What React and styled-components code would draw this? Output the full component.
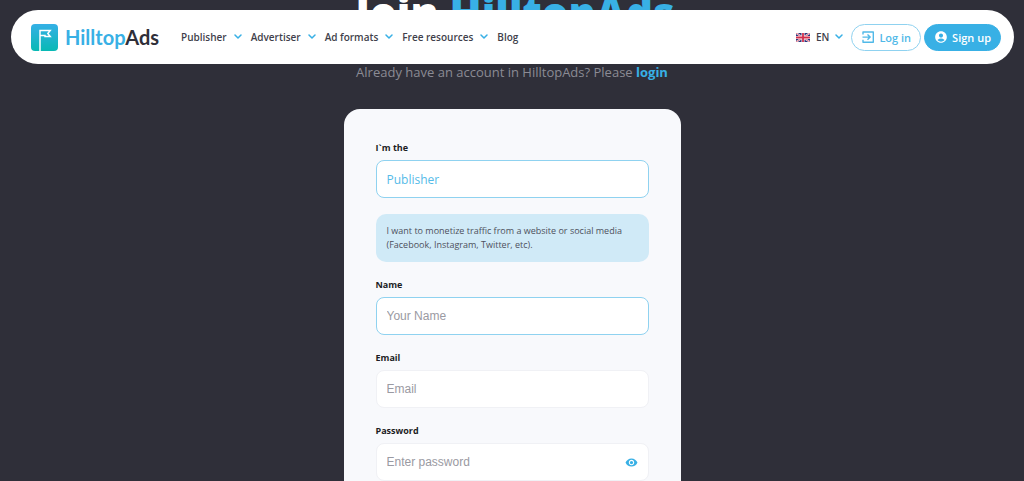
import React, { useState } from 'react';
import styled, { createGlobalStyle } from 'styled-components';
import { MdAccountCircle, MdRemoveRedEye } from 'react-icons/md';

const blue = '#38b0e5';
const dark = '#2f2f39';

const GlobalStyle = createGlobalStyle`
  * {
    box-sizing: border-box;
  }

  html {
    scrollbar-width: none;
  }

  body {
    margin: 0;
    background: ${dark};
    font-family: 'Open Sans', 'Noto Sans', sans-serif;
  }
`;

const Header = styled.header`
  position: fixed;
  z-index: 10;
  top: 10px;
  left: 11px;
  right: 10px;
  display: flex;
  align-items: center;
  height: 54px;
  padding: 0 13px 0 20px;
  border-radius: 27px;
  background: #fff;
`;

const LogoLink = styled.a`
  display: flex;
  align-items: center;
  gap: 7px;
  margin-right: 22px;
  color: ${blue};
  font-family: Lato, sans-serif;
  font-size: 20px;
  font-weight: 700;
  line-height: 27px;
  text-decoration: none;
`;

const LogoDark = styled.span`
  color: ${dark};
`;

const Nav = styled.nav`
  display: flex;
  align-items: center;
  gap: 9px;
`;

const NavLink = styled.a`
  display: flex;
  align-items: center;
  gap: 7px;
  color: #3f3f4b;
  font-size: 10px;
  font-weight: 600;
  line-height: 16px;
  text-decoration: none;
  white-space: nowrap;
`;

const Actions = styled.div`
  display: flex;
  align-items: center;
  gap: 3px;
  margin-left: auto;
`;

const LangButton = styled.button`
  display: flex;
  align-items: center;
  gap: 6px;
  margin-right: 5px;
  padding: 0;
  border: 0;
  background: none;
  color: #3f3f4b;
  font-family: inherit;
  font-size: 10px;
  font-weight: 600;
  line-height: 16px;
  cursor: pointer;
`;

const PillLink = styled.a`
  display: flex;
  align-items: center;
  gap: 4px;
  height: 27px;
  padding: 0 9px;
  border: 1px solid ${props => (props.$filled ? blue : '#8fd2f0')};
  border-radius: 14px;
  background: ${props => (props.$filled ? blue : '#fff')};
  color: ${props => (props.$filled ? '#fff' : '#50b9e8')};
  font-size: 11px;
  font-weight: 600;
  text-decoration: none;
  white-space: nowrap;
`;

const Main = styled.main`
  display: flex;
  flex-direction: column;
  align-items: center;
  margin-top: -19px;
`;

const Title = styled.h1`
  margin: 0 0 19px;
  padding-left: 6px;
  color: #fff;
  font-size: 42px;
  font-weight: 800;
  line-height: 62px;
  white-space: nowrap;
`;

const Accent = styled.span`
  color: ${blue};
`;

const Hint = styled.p`
  margin: 0 0 27px;
  color: #8b8b94;
  font-size: 13px;
  line-height: 20px;
`;

const LoginLink = styled.a`
  color: ${blue};
  font-weight: 700;
  text-decoration: none;
`;

const Form = styled.form`
  display: flex;
  flex-direction: column;
  gap: 16px;
  width: 100%;
  max-width: 337px;
  padding: 32px;
  border-radius: 16px;
  background: #f8f9fc;
`;

const Field = styled.div`
  display: flex;
  flex-direction: column;
  gap: 5px;
`;

const Label = styled.label`
  color: #1d1d24;
  font-size: 9px;
  font-weight: 700;
  line-height: 14px;
`;

const Select = styled.select`
  width: 100%;
  height: 38px;
  padding: 0 10px;
  border: 1px solid #8fd2f0;
  border-radius: 8px;
  outline: 0;
  appearance: none;
  background: #fff;
  color: #55bbe8;
  font-family: inherit;
  font-size: 12px;
`;

const Input = styled.input`
  width: 100%;
  height: 38px;
  padding: 0 10px;
  border: 1px solid ${props => (props.$active ? '#8fd2f0' : '#f0f1f5')};
  border-radius: 8px;
  outline: 0;
  background: #fff;
  color: ${dark};
  font-family: 'Liberation Sans', sans-serif;
  font-size: 12px;

  &::placeholder {
    color: #9a9aa2;
    opacity: 1;
  }
`;

const Note = styled.p`
  margin: 0;
  padding: 10px 11px;
  border-radius: 10px;
  background: #d0eaf7;
  color: #4d505c;
  font-size: 9px;
  line-height: 14px;
`;

const PasswordBox = styled.div`
  position: relative;
`;

const EyeButton = styled.button`
  position: absolute;
  top: 0;
  bottom: 0;
  right: 11px;
  display: flex;
  align-items: center;
  padding: 0;
  border: 0;
  background: none;
  color: ${blue};
  cursor: pointer;
`;

const Logo = () => (
  <svg width="27" height="27" viewBox="0 0 27 27" aria-hidden="true">
    <defs>
      <linearGradient id="logo-fill" x1="0" y1="0" x2="0" y2="1">
        <stop offset="0" stopColor="#35b0e6" />
        <stop offset="1" stopColor="#08b9b4" />
      </linearGradient>
    </defs>
    <rect width="27" height="27" rx="4" fill="url(#logo-fill)" />
    <path d="M9 27V6.5H19.2L16.8 9.5L19.2 12.5H14V11.5H9" fill="none" stroke="#fff" strokeWidth="1.5" />
  </svg>
);

const Chevron = () => (
  <svg width="8" height="6" viewBox="0 0 8 6" aria-hidden="true">
    <path d="M1 1L4 4L7 1" fill="none" stroke={blue} strokeWidth="1.5" strokeLinecap="round" strokeLinejoin="round" />
  </svg>
);

const LoginIcon = () => (
  <svg width="14" height="14" viewBox="0 0 14 14" fill="none" stroke="currentColor" strokeWidth="1.4" aria-hidden="true">
    <path d="M2 4.5V2H12.3V12.3H2V9.8" strokeLinejoin="round" />
    <path d="M1.5 7.1H9M6.5 4.5L9.1 7.1L6.5 9.7" />
  </svg>
);

const Flag = () => (
  <svg width="14" height="9" viewBox="0 0 14 9" aria-hidden="true">
    <rect width="14" height="9" fill="#29337a" />
    <path d="M0 0L14 9M14 0L0 9" stroke="#fff" strokeWidth="1.8" />
    <path d="M0 0L14 9M14 0L0 9" stroke="#d22f4c" strokeWidth="0.7" />
    <path d="M7 0V9M0 4.5H14" stroke="#fff" strokeWidth="3" />
    <path d="M7 0V9M0 4.5H14" stroke="#d22f4c" strokeWidth="1.8" />
  </svg>
);

const links = [
  { text: 'Publisher', menu: true },
  { text: 'Advertiser', menu: true },
  { text: 'Ad formats', menu: true },
  { text: 'Free resources', menu: true },
  { text: 'Blog' },
];

const NavBar = () => (
  <Header>
    <LogoLink href="#">
      <Logo />
      <span>Hilltop<LogoDark>Ads</LogoDark></span>
    </LogoLink>
    <Nav>
      {links.map(link => (
        <NavLink href="#" key={link.text}>
          {link.text}
          {link.menu && <Chevron />}
        </NavLink>
      ))}
    </Nav>
    <Actions>
      <LangButton type="button">
        <Flag />
        EN
        <Chevron />
      </LangButton>
      <PillLink href="#">
        <LoginIcon />
        Log in
      </PillLink>
      <PillLink href="#" $filled>
        <MdAccountCircle size={14} />
        Sign up
      </PillLink>
    </Actions>
  </Header>
);

const SignUpForm = () => {
  const [visible, setVisible] = useState(false);

  return (
    <Form>
      <Field>
        <Label htmlFor="role">I`m the</Label>
        <Select id="role">
          <option>Publisher</option>
        </Select>
      </Field>
      <Note>
        I want to monetize traffic from a website or social media (Facebook, Instagram, Twitter, etc).
      </Note>
      <Field>
        <Label htmlFor="name">Name</Label>
        <Input id="name" placeholder="Your Name" $active />
      </Field>
      <Field>
        <Label htmlFor="email">Email</Label>
        <Input id="email" type="email" placeholder="Email" />
      </Field>
      <Field>
        <Label htmlFor="password">Password</Label>
        <PasswordBox>
          <Input id="password" type={visible ? 'text' : 'password'} placeholder="Enter password" />
          <EyeButton type="button" aria-label="Show password" onClick={() => setVisible(!visible)}>
            <MdRemoveRedEye size={13} />
          </EyeButton>
        </PasswordBox>
      </Field>
    </Form>
  );
};

const App = () => (
  <>
    <GlobalStyle />
    <NavBar />
    <Main>
      <Title>Join <Accent>HilltopAds</Accent></Title>
      <Hint>
        Already have an account in HilltopAds? Please <LoginLink href="#">login</LoginLink>
      </Hint>
      <SignUpForm />
    </Main>
  </>
);

export default App;
